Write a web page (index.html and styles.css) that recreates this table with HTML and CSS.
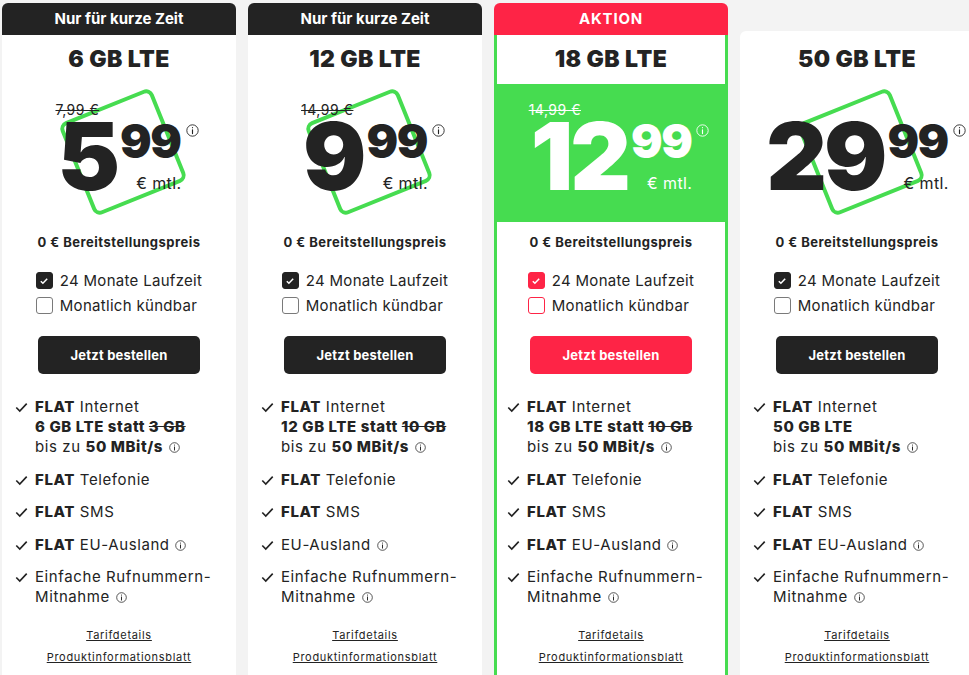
FILE: index.html
```html
<!DOCTYPE html>
<html lang="de">
<head>
<meta charset="utf-8">
<title>Tarife</title>
<link rel="stylesheet" href="styles.css">
</head>
<body>
<div class="plans">

  <div class="card">
    <div class="badge">Nur für kurze Zeit</div>
    <div class="body">
      <h2 class="title">6 GB LTE</h2>
      <div class="price-area">
        <div class="frame"></div>
        <div class="price">
          <s class="old">7,99 €</s>
          <div class="amount">
            <span class="int">5</span>
            <div class="right">
              <span class="dec">99</span>
              <span class="mtl">€ mtl.</span>
            </div>
            <svg class="pinfo" viewBox="0 0 16 16"><circle cx="8" cy="8" r="7" fill="none" stroke="currentColor" stroke-width="1.1"/><path d="M8 7.2v4.6M8 4.4v.2" stroke="currentColor" stroke-width="1.4" stroke-linecap="round"/></svg>
          </div>
        </div>
      </div>
      <p class="setup">0 € Bereitstellungspreis</p>
      <div class="opts-wrap">
        <ul class="opts">
          <li><span class="box checked"><svg viewBox="0 0 12 12"><path d="M2.8 6.2l2.1 2.1 4.3-4.5" fill="none" stroke="#fff" stroke-width="1.5"/></svg></span>24 Monate Laufzeit</li>
          <li><span class="box"></span>Monatlich kündbar</li>
        </ul>
      </div>
      <div class="btn-wrap"><a class="btn" href="#">Jetzt bestellen</a></div>
      <ul class="features">
        <li><svg class="chk" viewBox="0 0 14 12"><path d="M1.3 6l3.8 3.8 7.6-8" fill="none" stroke="currentColor" stroke-width="1.8"/></svg><div><b>FLAT</b> Internet<br><b>6 GB LTE statt <s>3 GB</s></b><br>bis zu <b>50 MBit/s</b> <svg class="finfo" viewBox="0 0 16 16"><circle cx="8" cy="8" r="7" fill="none" stroke="currentColor" stroke-width="1.1"/><path d="M8 7.2v4.6M8 4.4v.2" stroke="currentColor" stroke-width="1.4" stroke-linecap="round"/></svg></div></li>
        <li><svg class="chk" viewBox="0 0 14 12"><path d="M1.3 6l3.8 3.8 7.6-8" fill="none" stroke="currentColor" stroke-width="1.8"/></svg><div><b>FLAT</b> Telefonie</div></li>
        <li><svg class="chk" viewBox="0 0 14 12"><path d="M1.3 6l3.8 3.8 7.6-8" fill="none" stroke="currentColor" stroke-width="1.8"/></svg><div><b>FLAT</b> SMS</div></li>
        <li><svg class="chk" viewBox="0 0 14 12"><path d="M1.3 6l3.8 3.8 7.6-8" fill="none" stroke="currentColor" stroke-width="1.8"/></svg><div><b>FLAT</b> EU-Ausland <svg class="finfo" viewBox="0 0 16 16"><circle cx="8" cy="8" r="7" fill="none" stroke="currentColor" stroke-width="1.1"/><path d="M8 7.2v4.6M8 4.4v.2" stroke="currentColor" stroke-width="1.4" stroke-linecap="round"/></svg></div></li>
        <li><svg class="chk" viewBox="0 0 14 12"><path d="M1.3 6l3.8 3.8 7.6-8" fill="none" stroke="currentColor" stroke-width="1.8"/></svg><div>Einfache Rufnummern-<br>Mitnahme <svg class="finfo" viewBox="0 0 16 16"><circle cx="8" cy="8" r="7" fill="none" stroke="currentColor" stroke-width="1.1"/><path d="M8 7.2v4.6M8 4.4v.2" stroke="currentColor" stroke-width="1.4" stroke-linecap="round"/></svg></div></li>
      </ul>
      <div class="links"><a href="#">Tarifdetails</a><a href="#">Produktinformationsblatt</a></div>
    </div>
  </div>

  <div class="card">
    <div class="badge">Nur für kurze Zeit</div>
    <div class="body">
      <h2 class="title">12 GB LTE</h2>
      <div class="price-area">
        <div class="frame"></div>
        <div class="price">
          <s class="old">14,99 €</s>
          <div class="amount">
            <span class="int">9</span>
            <div class="right">
              <span class="dec">99</span>
              <span class="mtl">€ mtl.</span>
            </div>
            <svg class="pinfo" viewBox="0 0 16 16"><circle cx="8" cy="8" r="7" fill="none" stroke="currentColor" stroke-width="1.1"/><path d="M8 7.2v4.6M8 4.4v.2" stroke="currentColor" stroke-width="1.4" stroke-linecap="round"/></svg>
          </div>
        </div>
      </div>
      <p class="setup">0 € Bereitstellungspreis</p>
      <div class="opts-wrap">
        <ul class="opts">
          <li><span class="box checked"><svg viewBox="0 0 12 12"><path d="M2.8 6.2l2.1 2.1 4.3-4.5" fill="none" stroke="#fff" stroke-width="1.5"/></svg></span>24 Monate Laufzeit</li>
          <li><span class="box"></span>Monatlich kündbar</li>
        </ul>
      </div>
      <div class="btn-wrap"><a class="btn" href="#">Jetzt bestellen</a></div>
      <ul class="features">
        <li><svg class="chk" viewBox="0 0 14 12"><path d="M1.3 6l3.8 3.8 7.6-8" fill="none" stroke="currentColor" stroke-width="1.8"/></svg><div><b>FLAT</b> Internet<br><b>12 GB LTE statt <s>10 GB</s></b><br>bis zu <b>50 MBit/s</b> <svg class="finfo" viewBox="0 0 16 16"><circle cx="8" cy="8" r="7" fill="none" stroke="currentColor" stroke-width="1.1"/><path d="M8 7.2v4.6M8 4.4v.2" stroke="currentColor" stroke-width="1.4" stroke-linecap="round"/></svg></div></li>
        <li><svg class="chk" viewBox="0 0 14 12"><path d="M1.3 6l3.8 3.8 7.6-8" fill="none" stroke="currentColor" stroke-width="1.8"/></svg><div><b>FLAT</b> Telefonie</div></li>
        <li><svg class="chk" viewBox="0 0 14 12"><path d="M1.3 6l3.8 3.8 7.6-8" fill="none" stroke="currentColor" stroke-width="1.8"/></svg><div><b>FLAT</b> SMS</div></li>
        <li><svg class="chk" viewBox="0 0 14 12"><path d="M1.3 6l3.8 3.8 7.6-8" fill="none" stroke="currentColor" stroke-width="1.8"/></svg><div>EU-Ausland <svg class="finfo" viewBox="0 0 16 16"><circle cx="8" cy="8" r="7" fill="none" stroke="currentColor" stroke-width="1.1"/><path d="M8 7.2v4.6M8 4.4v.2" stroke="currentColor" stroke-width="1.4" stroke-linecap="round"/></svg></div></li>
        <li><svg class="chk" viewBox="0 0 14 12"><path d="M1.3 6l3.8 3.8 7.6-8" fill="none" stroke="currentColor" stroke-width="1.8"/></svg><div>Einfache Rufnummern-<br>Mitnahme <svg class="finfo" viewBox="0 0 16 16"><circle cx="8" cy="8" r="7" fill="none" stroke="currentColor" stroke-width="1.1"/><path d="M8 7.2v4.6M8 4.4v.2" stroke="currentColor" stroke-width="1.4" stroke-linecap="round"/></svg></div></li>
      </ul>
      <div class="links"><a href="#">Tarifdetails</a><a href="#">Produktinformationsblatt</a></div>
    </div>
  </div>

  <div class="card featured">
    <div class="badge">AKTION</div>
    <div class="body">
      <h2 class="title">18 GB LTE</h2>
      <div class="price-area">
        <div class="price">
          <s class="old">14,99 €</s>
          <div class="amount">
            <span class="int">12</span>
            <div class="right">
              <span class="dec">99</span>
              <span class="mtl">€ mtl.</span>
            </div>
            <svg class="pinfo" viewBox="0 0 16 16"><circle cx="8" cy="8" r="7" fill="none" stroke="currentColor" stroke-width="1.1"/><path d="M8 7.2v4.6M8 4.4v.2" stroke="currentColor" stroke-width="1.4" stroke-linecap="round"/></svg>
          </div>
        </div>
      </div>
      <p class="setup">0 € Bereitstellungspreis</p>
      <div class="opts-wrap">
        <ul class="opts">
          <li><span class="box checked"><svg viewBox="0 0 12 12"><path d="M2.8 6.2l2.1 2.1 4.3-4.5" fill="none" stroke="#fff" stroke-width="1.5"/></svg></span>24 Monate Laufzeit</li>
          <li><span class="box"></span>Monatlich kündbar</li>
        </ul>
      </div>
      <div class="btn-wrap"><a class="btn" href="#">Jetzt bestellen</a></div>
      <ul class="features">
        <li><svg class="chk" viewBox="0 0 14 12"><path d="M1.3 6l3.8 3.8 7.6-8" fill="none" stroke="currentColor" stroke-width="1.8"/></svg><div><b>FLAT</b> Internet<br><b>18 GB LTE statt <s>10 GB</s></b><br>bis zu <b>50 MBit/s</b> <svg class="finfo" viewBox="0 0 16 16"><circle cx="8" cy="8" r="7" fill="none" stroke="currentColor" stroke-width="1.1"/><path d="M8 7.2v4.6M8 4.4v.2" stroke="currentColor" stroke-width="1.4" stroke-linecap="round"/></svg></div></li>
        <li><svg class="chk" viewBox="0 0 14 12"><path d="M1.3 6l3.8 3.8 7.6-8" fill="none" stroke="currentColor" stroke-width="1.8"/></svg><div><b>FLAT</b> Telefonie</div></li>
        <li><svg class="chk" viewBox="0 0 14 12"><path d="M1.3 6l3.8 3.8 7.6-8" fill="none" stroke="currentColor" stroke-width="1.8"/></svg><div><b>FLAT</b> SMS</div></li>
        <li><svg class="chk" viewBox="0 0 14 12"><path d="M1.3 6l3.8 3.8 7.6-8" fill="none" stroke="currentColor" stroke-width="1.8"/></svg><div><b>FLAT</b> EU-Ausland <svg class="finfo" viewBox="0 0 16 16"><circle cx="8" cy="8" r="7" fill="none" stroke="currentColor" stroke-width="1.1"/><path d="M8 7.2v4.6M8 4.4v.2" stroke="currentColor" stroke-width="1.4" stroke-linecap="round"/></svg></div></li>
        <li><svg class="chk" viewBox="0 0 14 12"><path d="M1.3 6l3.8 3.8 7.6-8" fill="none" stroke="currentColor" stroke-width="1.8"/></svg><div>Einfache Rufnummern-<br>Mitnahme <svg class="finfo" viewBox="0 0 16 16"><circle cx="8" cy="8" r="7" fill="none" stroke="currentColor" stroke-width="1.1"/><path d="M8 7.2v4.6M8 4.4v.2" stroke="currentColor" stroke-width="1.4" stroke-linecap="round"/></svg></div></li>
      </ul>
      <div class="links"><a href="#">Tarifdetails</a><a href="#">Produktinformationsblatt</a></div>
    </div>
  </div>

  <div class="card plain">
    <div class="body">
      <h2 class="title">50 GB LTE</h2>
      <div class="price-area">
        <div class="frame"></div>
        <div class="price">
          <span class="old empty"></span>
          <div class="amount">
            <span class="int">29</span>
            <div class="right">
              <span class="dec">99</span>
              <span class="mtl">€ mtl.</span>
            </div>
            <svg class="pinfo" viewBox="0 0 16 16"><circle cx="8" cy="8" r="7" fill="none" stroke="currentColor" stroke-width="1.1"/><path d="M8 7.2v4.6M8 4.4v.2" stroke="currentColor" stroke-width="1.4" stroke-linecap="round"/></svg>
          </div>
        </div>
      </div>
      <p class="setup">0 € Bereitstellungspreis</p>
      <div class="opts-wrap">
        <ul class="opts">
          <li><span class="box checked"><svg viewBox="0 0 12 12"><path d="M2.8 6.2l2.1 2.1 4.3-4.5" fill="none" stroke="#fff" stroke-width="1.5"/></svg></span>24 Monate Laufzeit</li>
          <li><span class="box"></span>Monatlich kündbar</li>
        </ul>
      </div>
      <div class="btn-wrap"><a class="btn" href="#">Jetzt bestellen</a></div>
      <ul class="features">
        <li><svg class="chk" viewBox="0 0 14 12"><path d="M1.3 6l3.8 3.8 7.6-8" fill="none" stroke="currentColor" stroke-width="1.8"/></svg><div><b>FLAT</b> Internet<br><b>50 GB LTE</b><br>bis zu <b>50 MBit/s</b> <svg class="finfo" viewBox="0 0 16 16"><circle cx="8" cy="8" r="7" fill="none" stroke="currentColor" stroke-width="1.1"/><path d="M8 7.2v4.6M8 4.4v.2" stroke="currentColor" stroke-width="1.4" stroke-linecap="round"/></svg></div></li>
        <li><svg class="chk" viewBox="0 0 14 12"><path d="M1.3 6l3.8 3.8 7.6-8" fill="none" stroke="currentColor" stroke-width="1.8"/></svg><div><b>FLAT</b> Telefonie</div></li>
        <li><svg class="chk" viewBox="0 0 14 12"><path d="M1.3 6l3.8 3.8 7.6-8" fill="none" stroke="currentColor" stroke-width="1.8"/></svg><div><b>FLAT</b> SMS</div></li>
        <li><svg class="chk" viewBox="0 0 14 12"><path d="M1.3 6l3.8 3.8 7.6-8" fill="none" stroke="currentColor" stroke-width="1.8"/></svg><div><b>FLAT</b> EU-Ausland <svg class="finfo" viewBox="0 0 16 16"><circle cx="8" cy="8" r="7" fill="none" stroke="currentColor" stroke-width="1.1"/><path d="M8 7.2v4.6M8 4.4v.2" stroke="currentColor" stroke-width="1.4" stroke-linecap="round"/></svg></div></li>
        <li><svg class="chk" viewBox="0 0 14 12"><path d="M1.3 6l3.8 3.8 7.6-8" fill="none" stroke="currentColor" stroke-width="1.8"/></svg><div>Einfache Rufnummern-<br>Mitnahme <svg class="finfo" viewBox="0 0 16 16"><circle cx="8" cy="8" r="7" fill="none" stroke="currentColor" stroke-width="1.1"/><path d="M8 7.2v4.6M8 4.4v.2" stroke="currentColor" stroke-width="1.4" stroke-linecap="round"/></svg></div></li>
      </ul>
      <div class="links"><a href="#">Tarifdetails</a><a href="#">Produktinformationsblatt</a></div>
    </div>
  </div>

</div>
</body>
</html>
```

FILE: styles.css
```css
* { box-sizing: border-box; }

html, body {
  margin: 0;
  padding: 0;
  background: #f3f3f3;
  overflow: hidden;
}

body {
  font-family: "Inter", "Liberation Sans", sans-serif;
  color: #232323;
  -webkit-font-smoothing: antialiased;
}

.plans {
  display: flex;
  align-items: flex-start;
  gap: 12px;
  padding: 3px 0 0 2px;
  width: 1000px;
  height: 675px;
  overflow: hidden;
}

.card {
  flex: 0 0 234px;
  width: 234px;
  display: flex;
  flex-direction: column;
}

.badge {
  height: 32px;
  background: #232323;
  color: #fff;
  border-radius: 6px 6px 0 0;
  font-weight: 700;
  font-size: 15px;
  line-height: 32px;
  text-align: center;
}

.featured .badge {
  background: #fe2446;
  letter-spacing: 0.8px;
}

.body {
  background: #fff;
  height: 700px;
}

.featured .body {
  border: 3px solid #46dc50;
  border-top: none;
}

.plain {
  margin-top: 28px;
}

.plain .body {
  border-radius: 6px 6px 0 0;
  padding-top: 4px;
}

.title {
  margin: 0;
  padding-top: 10px;
  font-size: 23px;
  line-height: 28px;
  font-weight: 900;
  text-align: center;
  letter-spacing: 0.4px;
}

.price-area {
  position: relative;
  margin-top: 11px;
  height: 138px;
  display: flex;
  justify-content: center;
  padding-top: 18px;
}

.featured .price-area {
  background: #46dc50;
  color: #fff;
}

.frame {
  position: absolute;
  left: 50%;
  top: 50%;
  width: 100px;
  height: 100px;
  margin: -51px 0 0 -46px;
  border: 4px solid #46dc50;
  border-radius: 8px;
  transform: rotate(-22deg);
}

.price {
  position: relative;
}

.old {
  display: block;
  font-size: 14px;
  line-height: 16px;
  height: 16px;
  margin-left: -2px;
  letter-spacing: 0.5px;
}

.amount {
  position: relative;
  display: flex;
  align-items: flex-start;
  margin-top: 4px;
}

.int {
  font-size: 94px;
  line-height: 68px;
  font-weight: 900;
  letter-spacing: -3px;
}

.right {
  display: flex;
  flex-direction: column;
  align-items: flex-end;
  margin-left: 3px;
}

.dec {
  font-size: 47px;
  line-height: 35px;
  font-weight: 900;
  margin-top: 1px;
  letter-spacing: -1.5px;
}

.mtl {
  font-size: 16px;
  line-height: 18px;
  margin-top: 16px;
  letter-spacing: 0.4px;
  margin-right: -1px;
}

.pinfo {
  position: absolute;
  left: 100%;
  top: 2px;
  margin-left: 5px;
  width: 13px;
  height: 13px;
}

.setup {
  margin: 11px 0 0;
  font-size: 13px;
  line-height: 18px;
  font-weight: 700;
  text-align: center;
  letter-spacing: 0.5px;
}

.opts-wrap {
  display: flex;
  justify-content: center;
  margin-top: 17px;
}

.opts {
  list-style: none;
  margin: 0;
  padding: 0;
}

.opts li {
  display: flex;
  align-items: center;
  height: 25px;
  font-size: 15px;
  letter-spacing: 0.3px;
}

.box {
  width: 17px;
  height: 17px;
  border: 1px solid #7a7a7a;
  border-radius: 3px;
  margin-right: 7px;
  display: flex;
  align-items: center;
  justify-content: center;
}

.box.checked {
  background: #232323;
  border-color: #232323;
}

.box svg {
  width: 12px;
  height: 12px;
}

.featured .box {
  border-color: #fe2446;
}

.featured .box.checked {
  background: #fe2446;
}

.btn-wrap {
  display: flex;
  justify-content: center;
  margin-top: 18px;
}

.btn {
  width: 162px;
  height: 38px;
  border-radius: 5px;
  background: #232323;
  color: #fff;
  font-weight: 700;
  font-size: 13px;
  line-height: 38px;
  text-align: center;
  text-decoration: none;
  letter-spacing: 0.2px;
}

.featured .btn {
  background: #fe2446;
}

.features {
  list-style: none;
  margin: 23px 0 0;
  padding: 0 0 0 13px;
  display: flex;
  flex-direction: column;
  gap: 12.5px;
}

.featured .features {
  padding-left: 10px;
}

.features li {
  display: flex;
  align-items: flex-start;
  font-size: 15px;
  line-height: 20px;
  letter-spacing: 0.6px;
}

.features b {
  font-weight: 800;
}

.chk {
  flex: 0 0 13px;
  width: 13px;
  height: 11px;
  margin: 5px 7px 0 0;
}

.finfo {
  width: 11px;
  height: 11px;
  vertical-align: -1px;
  margin-left: 1px;
}

.links {
  margin-top: 20px;
  display: flex;
  flex-direction: column;
  align-items: center;
  gap: 6px;
}

.links a {
  font-size: 11px;
  line-height: 16px;
  color: #232323;
  text-decoration: underline;
  letter-spacing: 0.7px;
}
```
